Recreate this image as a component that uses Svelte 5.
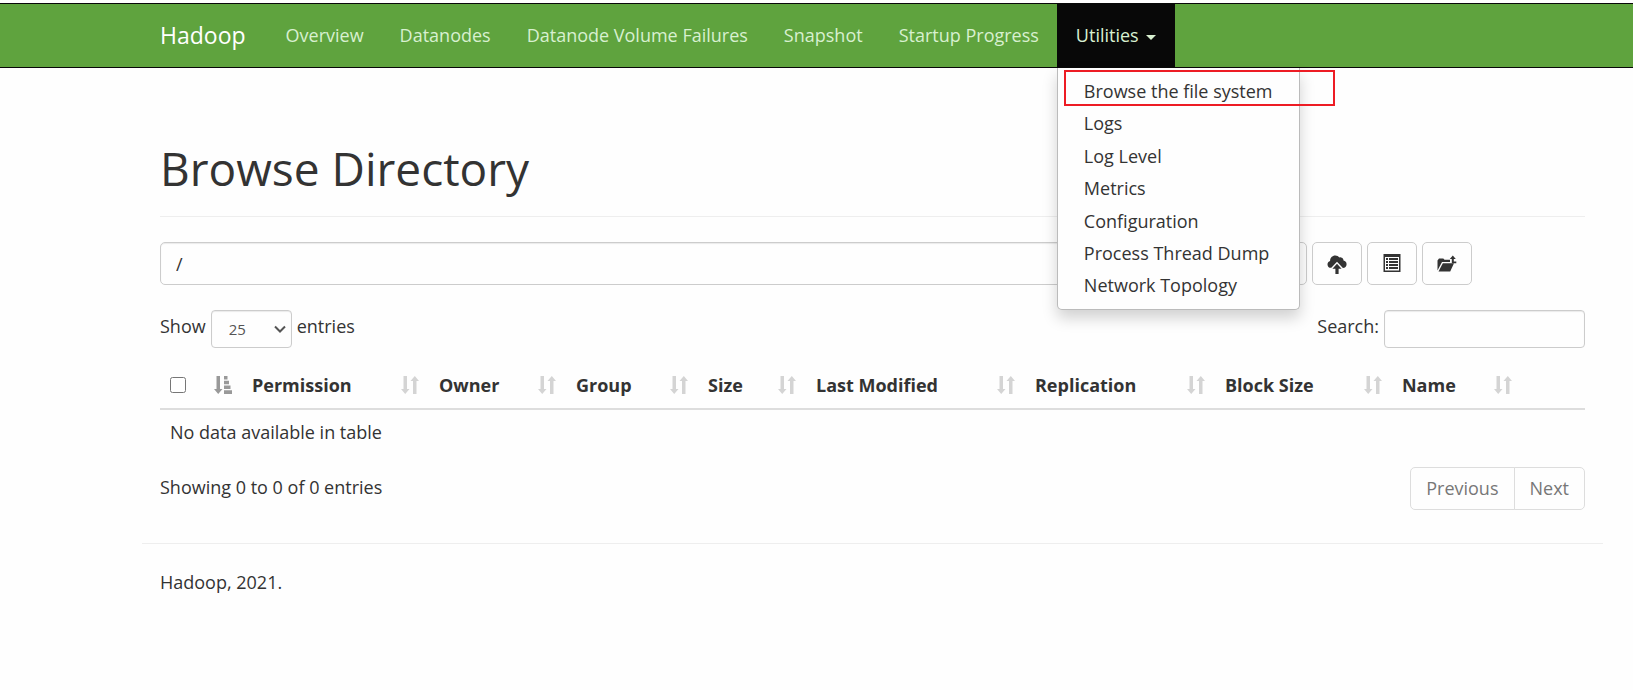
<script>
  const links = ['Overview', 'Datanodes', 'Datanode Volume Failures', 'Snapshot', 'Startup Progress'];
  const utilities = ['Browse the file system', 'Logs', 'Log Level', 'Metrics', 'Configuration', 'Process Thread Dump', 'Network Topology'];
  const columns = [
    { name: 'Permission', weight: 187 },
    { name: 'Owner', weight: 137 },
    { name: 'Group', weight: 132 },
    { name: 'Size', weight: 108 },
    { name: 'Last Modified', weight: 219 },
    { name: 'Replication', weight: 190 },
    { name: 'Block Size', weight: 177 },
    { name: 'Name', weight: 130 }
  ];
  const total = 1425;
  const pct = (w) => `width: ${(w / total) * 100}%`;
  let path = $state('/');
  let search = $state('');
</script>

<nav class="navbar">
  <a class="brand" href="#home">Hadoop</a>
  <ul class="links">
    {#each links as link}
      <li><a href="#{link}">{link}</a></li>
    {/each}
    <li class="open">
      <a href="#utilities">Utilities <span class="caret"></span></a>
      <ul class="menu">
        {#each utilities as item}
          <li><a href="#{item}">{item}</a></li>
        {/each}
      </ul>
      <span class="marker"></span>
    </li>
  </ul>
</nav>

<main class="container">
  <h1>Browse Directory</h1>

  <div class="toolbar">
    <div class="path">
      <input type="text" aria-label="Directory" bind:value={path} />
      <button type="button" aria-label="Go"></button>
    </div>
    <button type="button" class="icon" aria-label="Upload files">
      <svg viewBox="0 0 20 20"><path d="M4.300 13.800C2 14 .5 12.300.5 10.400c0-1.700 1-3 2.600-3.400C3 4 5.300 1.500 8.300 1.500c1.700 0 3.200.8 4.100 2.100.5-.2 1-.3 1.500-.2 1.600.2 2.700 1.600 2.600 3.200 1.800.3 3.100 1.800 3.100 3.600 0 2.100-1.600 3.700-3.700 3.700L10 7.800z"/><path d="M10 9.800l4.600 4.900h-3V20H8.400v-5.300h-3z"/></svg>
    </button>
    <button type="button" class="icon" aria-label="Cut and paste">
      <svg viewBox="0 0 20 20"><path fill-rule="evenodd" d="M1.500 0h17v18h-17zM3 3v13.500h14V3z"/><path d="M4 4h2v2H4zM7 4h9v2H7zM4 7h2v2H4zM7 7h9v2H7zM4 10h2v2H4zM7 10h9v2H7zM4 13h2v2H4zM7 13h9v2H7z"/></svg>
    </button>
    <button type="button" class="icon" aria-label="Parent directory">
      <svg viewBox="0 0 20 20"><path d="M.5 16.500V6.500L2 4.500h4.300l1.200 1.200H13V8H5z"/><path d="M5.800 9.200H17L13.200 17.500H1.500z"/><path d="M12.800 5L15.800 1.500 18.800 5H16.800v2.500H19.300V9.200H14.800V5z"/></svg>
    </button>
  </div>

  <div class="filters">
    <label>Show
      <select>
        <option>25</option>
      </select>
      entries</label>
    <label>Search: <input type="search" bind:value={search} /></label>
  </div>

  <table>
    <colgroup>
      <col style={pct(82)} />
      {#each columns as c}<col style={pct(c.weight)} />{/each}
      <col style={pct(63)} />
    </colgroup>
    <thead>
      <tr>
        <th>
          <div class="head">
            <input type="checkbox" aria-label="Select all" />
            <svg class="sort active" viewBox="0 0 18 18"><path d="M2.500 0h3.500v13h2.500L4.200 18 0 13h2.500zM10 0h3.500v3.500h-3.500zM10 4.700h5v3.600h-5zM10 9.500h6.500v3.600h-6.500zM10 14.300h8v3.700h-8z"/></svg>
          </div>
        </th>
        {#each columns as c}
          <th>
            <div class="head">
              <span>{c.name}</span>
              <svg class="sort" viewBox="0 0 18 18"><path d="M2.500 0h3.500v13h2.500L4.200 18 0 13h2.500zM12 18V5H9.500L13.800 0 18 5h-2.500v13z"/></svg>
            </div>
          </th>
        {/each}
        <th></th>
      </tr>
    </thead>
    <tbody>
      <tr><td colspan="10">No data available in table</td></tr>
    </tbody>
  </table>

  <div class="summary">
    <span>Showing 0 to 0 of 0 entries</span>
    <div class="pager">
      <button type="button">Previous</button>
      <button type="button">Next</button>
    </div>
  </div>
</main>

<footer>
  <p>Hadoop, 2021.</p>
</footer>

<style>
  :global(body) {
    background: #fefefe;
    color: #333;
    font-family: "Open Sans", "Noto Sans", sans-serif;
    font-size: 18px;
    line-height: 25px;
  }
  * { box-sizing: border-box; }
  a { color: inherit; text-decoration: none; }
  ul { list-style: none; margin: 0; padding: 0; }
  input, select, button { font: inherit; color: inherit; }

  .navbar {
    display: flex;
    margin-top: 3px;
    padding-left: 160px;
    background: #5fa33e;
    border: solid #080808;
    border-width: 1px 0;
    color: #d8f0d0;
    line-height: 63px;
  }
  .brand { padding-right: 22px; color: #fff; font-size: 23px; }
  .links { display: flex; }
  .links > li { position: relative; }
  .links > li > a { display: block; padding: 0 18px; white-space: nowrap; }
  .links > .open > a { padding: 0 19px; background: #080808; }
  .caret {
    display: inline-block;
    margin-left: 3px;
    border: solid transparent;
    border-width: 5px 5px 0;
    border-top-color: currentColor;
    vertical-align: middle;
  }
  .menu {
    position: absolute;
    z-index: 2;
    top: 100%;
    left: 0;
    min-width: 240px;
    padding: 7px 0;
    background: #fefefe;
    border: 1px solid #bbb;
    border-top: 0;
    border-radius: 0 0 5px 5px;
    box-shadow: 0 8px 15px rgba(0, 0, 0, 0.18);
    color: #333;
    line-height: 1.8;
    background-clip: padding-box;
    margin-top: 1px;
  }
  .menu a { display: block; padding: 0 26px; white-space: nowrap; }
  .marker {
    position: absolute;
    z-index: 3;
    top: 66px;
    left: 7px;
    width: 271px;
    height: 36px;
    border: 2px solid #ed1c24;
    pointer-events: none;
  }

  .container { padding: 72px 48px 0 160px; }
  h1 {
    margin: 0 0 25px;
    padding-bottom: 20px;
    border-bottom: 1px solid #eee;
    font-size: 46px;
    font-weight: 400;
    line-height: 56px;
  }

  .toolbar { display: flex; gap: 5px; padding-right: 113px; }
  .toolbar button, .path input {
    height: 43px;
    background: #fefefe;
    border: 1px solid #ccc;
    border-radius: 5px;
  }
  .path { display: flex; flex: 1; }
  .path input {
    flex: 1;
    min-width: 0;
    padding: 0 15px;
    border-radius: 5px 0 0 5px;
    box-shadow: inset 0 1px 1px rgba(0, 0, 0, 0.08);
  }
  .path button { width: 60px; margin-left: -1px; border-radius: 0 5px 5px 0; }
  .toolbar .icon { display: grid; place-items: center; width: 50px; padding: 0; }
  .icon svg { width: 20px; height: 20px; fill: #333; }

  .filters { display: flex; justify-content: space-between; margin-top: 25px; }
  .filters label { display: flex; gap: 5px; line-height: 33px; }
  .filters input, .filters select {
    height: 38px;
    background: #fefefe;
    border: 1px solid #ccc;
    border-radius: 4px;
    box-shadow: inset 0 1px 1px rgba(0, 0, 0, 0.08);
  }
  .filters select {
    width: 81px;
    padding: 0 0 0 17px;
    appearance: none;
    background: #fefefe url("data:image/svg+xml,%3Csvg xmlns='http://www.w3.org/2000/svg' viewBox='0 0 12 8'%3E%3Cpath d='M1 1.500l5 5 5-5' fill='none' stroke='%23555' stroke-width='2'/%3E%3C/svg%3E") no-repeat right 5px center / 12px 8px;
    color: #555;
    font-size: 15px;
  }
  .filters input { width: 201px; padding: 0 12px; font-size: 15px; }

  table { width: 100%; margin-top: 18px; border-collapse: collapse; table-layout: fixed; }
  th { height: 43px; padding: 0 10px 4px; border-bottom: 2px solid #ddd; text-align: left; }
  .head { display: flex; align-items: center; justify-content: space-between; white-space: nowrap; }
  .head input { width: 16px; height: 16px; margin: 0; }
  .sort { width: 18px; height: 18px; fill: #d4d4d4; }
  .sort.active { fill: #999; }
  td { height: 46px; padding: 0 10px; }

  .summary { display: flex; justify-content: space-between; margin-top: 12px; line-height: 41px; }
  .pager { display: flex; }
  .pager button {
    height: 43px;
    padding: 0 15px;
    background: #fefefe;
    border: 1px solid #ddd;
    border-radius: 5px 0 0 5px;
    color: #777;
  }
  .pager button + button { margin-left: -1px; border-radius: 0 5px 5px 0; }

  footer { margin: 33px 30px 0 142px; padding: 26px 18px; border-top: 1px solid #eee; }
  footer p { margin: 0; }
</style>
